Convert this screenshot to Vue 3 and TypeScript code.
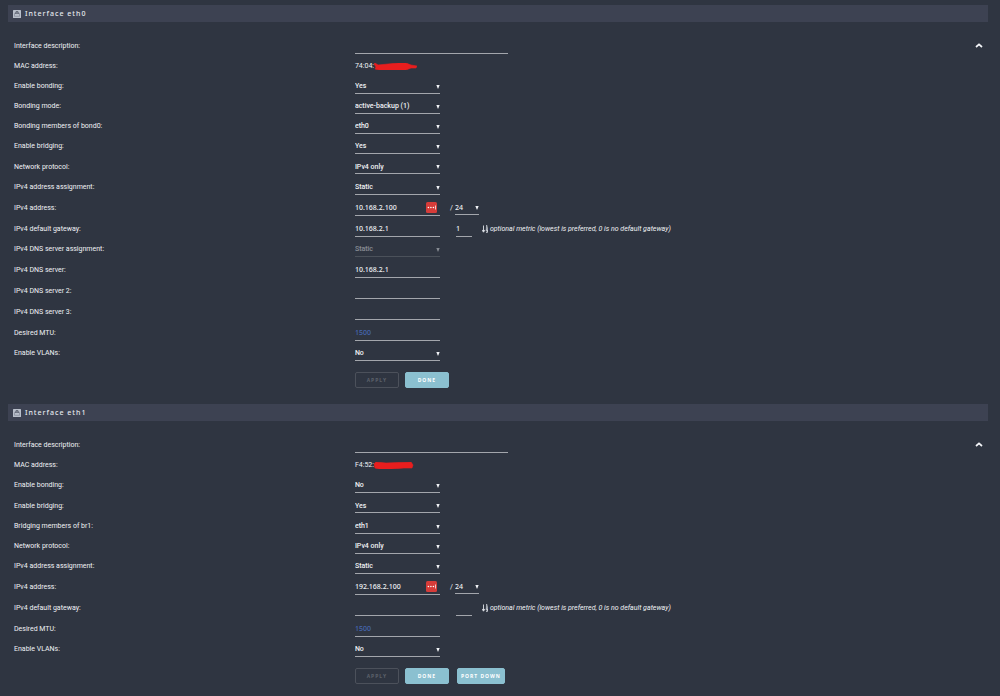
<script setup lang="ts">
import { reactive } from 'vue'

type Kind = 'text' | 'select' | 'static' | 'address' | 'gateway'

interface Row {
  id: string
  label: string
  kind: Kind
  value: string
  extra?: string
  wide?: boolean
  muted?: boolean
  placeholder?: string
  roomy?: boolean
  redaction?: string
}

interface Panel {
  name: string
  rows: Row[]
  portDown: boolean
}

const panels = reactive<Panel[]>([
  {
    name: 'eth0',
    portDown: false,
    rows: [
      { id: 'desc', label: 'Interface description:', kind: 'text', value: '', wide: true },
      { id: 'mac', label: 'MAC address:', kind: 'static', value: '74:04:', redaction: 'M0 1 L1 0 L4 2 L14 1 L24 0 L32 0 L37 2 L43 3 L42 5 L37 5 L32 7 L20 7 L5 7 L1 6 L2 4 Z' },
      { id: 'bonding', label: 'Enable bonding:', kind: 'select', value: 'Yes' },
      { id: 'mode', label: 'Bonding mode:', kind: 'select', value: 'active-backup (1)' },
      { id: 'bondmembers', label: 'Bonding members of bond0:', kind: 'select', value: 'eth0' },
      { id: 'bridging', label: 'Enable bridging:', kind: 'select', value: 'Yes' },
      { id: 'protocol', label: 'Network protocol:', kind: 'select', value: 'IPv4 only', roomy: true },
      { id: 'assign', label: 'IPv4 address assignment:', kind: 'select', value: 'Static' },
      { id: 'address', label: 'IPv4 address:', kind: 'address', value: '10.168.2.100', extra: '24' },
      { id: 'gateway', label: 'IPv4 default gateway:', kind: 'gateway', value: '10.168.2.1', extra: '1' },
      { id: 'dnsassign', label: 'IPv4 DNS server assignment:', kind: 'select', value: 'Static', muted: true },
      { id: 'dns1', label: 'IPv4 DNS server:', kind: 'text', value: '10.168.2.1' },
      { id: 'dns2', label: 'IPv4 DNS server 2:', kind: 'text', value: '' },
      { id: 'dns3', label: 'IPv4 DNS server 3:', kind: 'text', value: '' },
      { id: 'mtu', label: 'Desired MTU:', kind: 'text', value: '', placeholder: '1500' },
      { id: 'vlans', label: 'Enable VLANs:', kind: 'select', value: 'No' },
    ],
  },
  {
    name: 'eth1',
    portDown: true,
    rows: [
      { id: 'desc', label: 'Interface description:', kind: 'text', value: '', wide: true },
      { id: 'mac', label: 'MAC address:', kind: 'static', value: 'F4:52:', redaction: 'M0 2 L2 0 L12 1 L37 0 L39 3 L38 6 L30 6 L18 7 L5 7 L1 6 Z' },
      { id: 'bonding', label: 'Enable bonding:', kind: 'select', value: 'No' },
      { id: 'bridging', label: 'Enable bridging:', kind: 'select', value: 'Yes', roomy: true },
      { id: 'members', label: 'Bridging members of br1:', kind: 'select', value: 'eth1' },
      { id: 'protocol', label: 'Network protocol:', kind: 'select', value: 'IPv4 only' },
      { id: 'assign', label: 'IPv4 address assignment:', kind: 'select', value: 'Static' },
      { id: 'address', label: 'IPv4 address:', kind: 'address', value: '192.168.2.100', extra: '24' },
      { id: 'gateway', label: 'IPv4 default gateway:', kind: 'gateway', value: '', extra: '' },
      { id: 'mtu', label: 'Desired MTU:', kind: 'text', value: '', placeholder: '1500' },
      { id: 'vlans', label: 'Enable VLANs:', kind: 'select', value: 'No' },
    ],
  },
])

function isTall(row: Row): boolean {
  return row.roomy === true || row.kind === 'text' || row.kind === 'address' || row.kind === 'gateway'
}
</script>

<template>
  <main class="page">
    <section v-for="panel in panels" :key="panel.name" class="panel">
      <h2 class="title">
        <svg class="title-icon" viewBox="0 0 8 8" aria-hidden="true">
          <rect width="8" height="8" rx="0.5" fill="#b9bfca" />
          <path d="M1.5 6.3V3.3H2.6V1.8H5.4V3.3H6.5V6.3Z" fill="none" stroke="#7b8190" stroke-width="0.6" />
          <path d="M2 3.2H6M3 1.8H5" stroke="#3d4252" stroke-width="0.8" />
        </svg>
        Interface {{ panel.name }}
      </h2>
      <form class="body" @submit.prevent>
        <div v-for="row in panel.rows" :key="row.id" class="row" :class="{ tall: isTall(row) }">
          <component
            :is="row.kind === 'static' ? 'span' : 'label'"
            class="label"
            :for="row.kind === 'static' ? undefined : panel.name + row.id"
          >{{ row.label }}</component>

          <div class="field">
            <template v-if="row.kind === 'static'">
              <span>{{ row.value }}</span>
              <svg class="redaction" viewBox="0 0 43 7" aria-hidden="true">
                <path :d="row.redaction" fill="#e81e1e" stroke="#e81e1e" stroke-width="0.6" stroke-linejoin="round" />
              </svg>
            </template>

            <span v-else-if="row.kind === 'select'" class="select" :class="{ muted: row.muted }">
              <select :id="panel.name + row.id" v-model="row.value" :disabled="row.muted">
                <option>{{ row.value }}</option>
              </select>
              <svg class="arrow" viewBox="0 0 4 4" aria-hidden="true"><path d="M0.3 0H3.7L2 4Z" /></svg>
            </span>

            <input
              v-else-if="row.kind === 'text'"
              :id="panel.name + row.id"
              v-model="row.value"
              type="text"
              :class="{ wide: row.wide }"
              :placeholder="row.placeholder"
            />

            <template v-else-if="row.kind === 'address'">
              <span class="with-badge">
                <input :id="panel.name + row.id" v-model="row.value" type="text" />
                <svg class="badge" viewBox="0 0 11 11" aria-hidden="true">
                  <rect width="11" height="11" rx="1.5" fill="#d63c39" />
                  <circle cx="2.4" cy="5.5" r="0.8" fill="#fff" />
                  <circle cx="4.9" cy="5.5" r="0.8" fill="#fff" />
                  <circle cx="7.4" cy="5.5" r="0.8" fill="#fff" />
                  <rect x="9" y="3.5" width="0.7" height="4" fill="#fff" />
                </svg>
              </span>
              <span class="slash">/</span>
              <span class="select mask">
                <select v-model="row.extra" aria-label="Network mask">
                  <option>{{ row.extra }}</option>
                </select>
                <svg class="arrow" viewBox="0 0 4 4" aria-hidden="true"><path d="M0.3 0H3.7L2 4Z" /></svg>
              </span>
            </template>

            <template v-else>
              <input :id="panel.name + row.id" v-model="row.value" type="text" />
              <input v-model="row.extra" class="metric" type="text" aria-label="Metric" />
              <svg class="sort" viewBox="0 0 6 8" aria-hidden="true">
                <path d="M1.5 0.5V6M0.4 5.4H2.6L1.5 7.2Z" fill="#dfe2e8" stroke="#dfe2e8" stroke-width="0.9" />
                <path d="M4.9 0.5V3.2M3.9 3.2H6M4 0.8H5M5.6 6V4.6H4.2V5.8H5.6V7.3H4" fill="none" stroke="#dfe2e8" stroke-width="0.9" />
              </svg>
              <em class="hint">optional metric (lowest is preferred, 0 is no default gateway)</em>
            </template>
          </div>
        </div>

        <div class="actions">
          <button type="button" class="button" disabled>APPLY</button>
          <button type="button" class="button solid">DONE</button>
          <button v-if="panel.portDown" type="button" class="button solid port">PORT DOWN</button>
        </div>

        <button type="button" class="collapse" aria-label="Collapse">
          <svg viewBox="0 0 8 5" aria-hidden="true">
            <path d="M1 4L4 1.3L7 4" fill="none" stroke="#f4f6f9" stroke-width="1.7" />
          </svg>
        </button>
      </form>
    </section>
  </main>
</template>

<style>
body {
  margin: 0;
  background: #2f3541;
}
</style>

<style scoped>
.page {
  min-height: 100vh;
  box-sizing: border-box;
  padding: 5px 12px 0 8px;
  background: #2f3541;
  color: #f0f2f5;
  font-family: Roboto, "Noto Sans", sans-serif;
  font-size: 7px;
  font-weight: 400;
}

.panel {
  margin-bottom: 16px;
}

.title {
  display: flex;
  align-items: center;
  gap: 4px;
  height: 17px;
  margin: 0;
  padding-left: 5px;
  background: #3d4252;
  color: #e6e9ef;
  font-family: "Noto Sans", sans-serif;
  font-size: 7px;
  font-weight: 500;
  letter-spacing: 1px;
}

.title-icon {
  width: 8px;
  height: 8px;
}

.body {
  position: relative;
  padding: 13px 0 0 6px;
}

.row {
  display: grid;
  grid-template-columns: 35% 1fr;
  align-items: center;
  height: 20px;
}

.row.tall {
  height: 21px;
}

.field {
  display: flex;
  align-items: center;
}

input,
select {
  box-sizing: border-box;
  width: 85px;
  height: 16px;
  margin: 0;
  padding: 0;
  border: 0;
  border-bottom: 1px solid #a3a6ac;
  border-radius: 0;
  outline: 0;
  background: transparent;
  color: inherit;
  font: inherit;
  appearance: none;
}

input {
  font-family: "Noto Sans", sans-serif;
  font-weight: 500;
}

select {
  height: 15px;
  padding-top: 1px;
  opacity: 1;
}

input::placeholder {
  color: #4668b2;
  opacity: 1;
}

input.wide {
  width: 153px;
}

.select {
  position: relative;
  display: flex;
  font-weight: 500;
}

.arrow {
  position: absolute;
  right: 0;
  top: 6px;
  width: 4px;
  height: 4px;
  fill: #f0f2f5;
  pointer-events: none;
}

.muted {
  opacity: 0.45;
}

.muted select {
  border-color: #6f737b;
}

.mask select {
  width: 24px;
  font-family: "Noto Sans", sans-serif;
}

.with-badge {
  position: relative;
  display: flex;
}

.badge {
  position: absolute;
  right: 3px;
  top: 2px;
  width: 11px;
  height: 11px;
}

.slash {
  width: 5px;
  margin-left: 10px;
}

input.metric {
  width: 16px;
  margin-left: 16px;
}

.sort {
  width: 6px;
  height: 8px;
  margin: 0 2px 0 10px;
}

.redaction {
  width: 43px;
  height: 7px;
}

.actions {
  display: flex;
  gap: 6px;
  margin: 9px 0 0 35%;
}

.button {
  box-sizing: border-box;
  min-width: 44px;
  height: 16px;
  padding: 0 3px;
  border: 1px solid #4c515b;
  border-radius: 2px;
  background: transparent;
  color: #5c616b;
  font-family: "Noto Sans", sans-serif;
  font-size: 5px;
  font-weight: 700;
  letter-spacing: 1px;
}

.button.solid {
  border-color: #8bc0d0;
  background: #8bc0d0;
  color: #fff;
}

.button.port {
  margin-left: 2px;
}

.collapse {
  position: absolute;
  top: 18px;
  right: 5px;
  display: flex;
  padding: 3px 0;
  border: 0;
  background: transparent;
}

.collapse svg {
  width: 8px;
  height: 5px;
}
</style>
